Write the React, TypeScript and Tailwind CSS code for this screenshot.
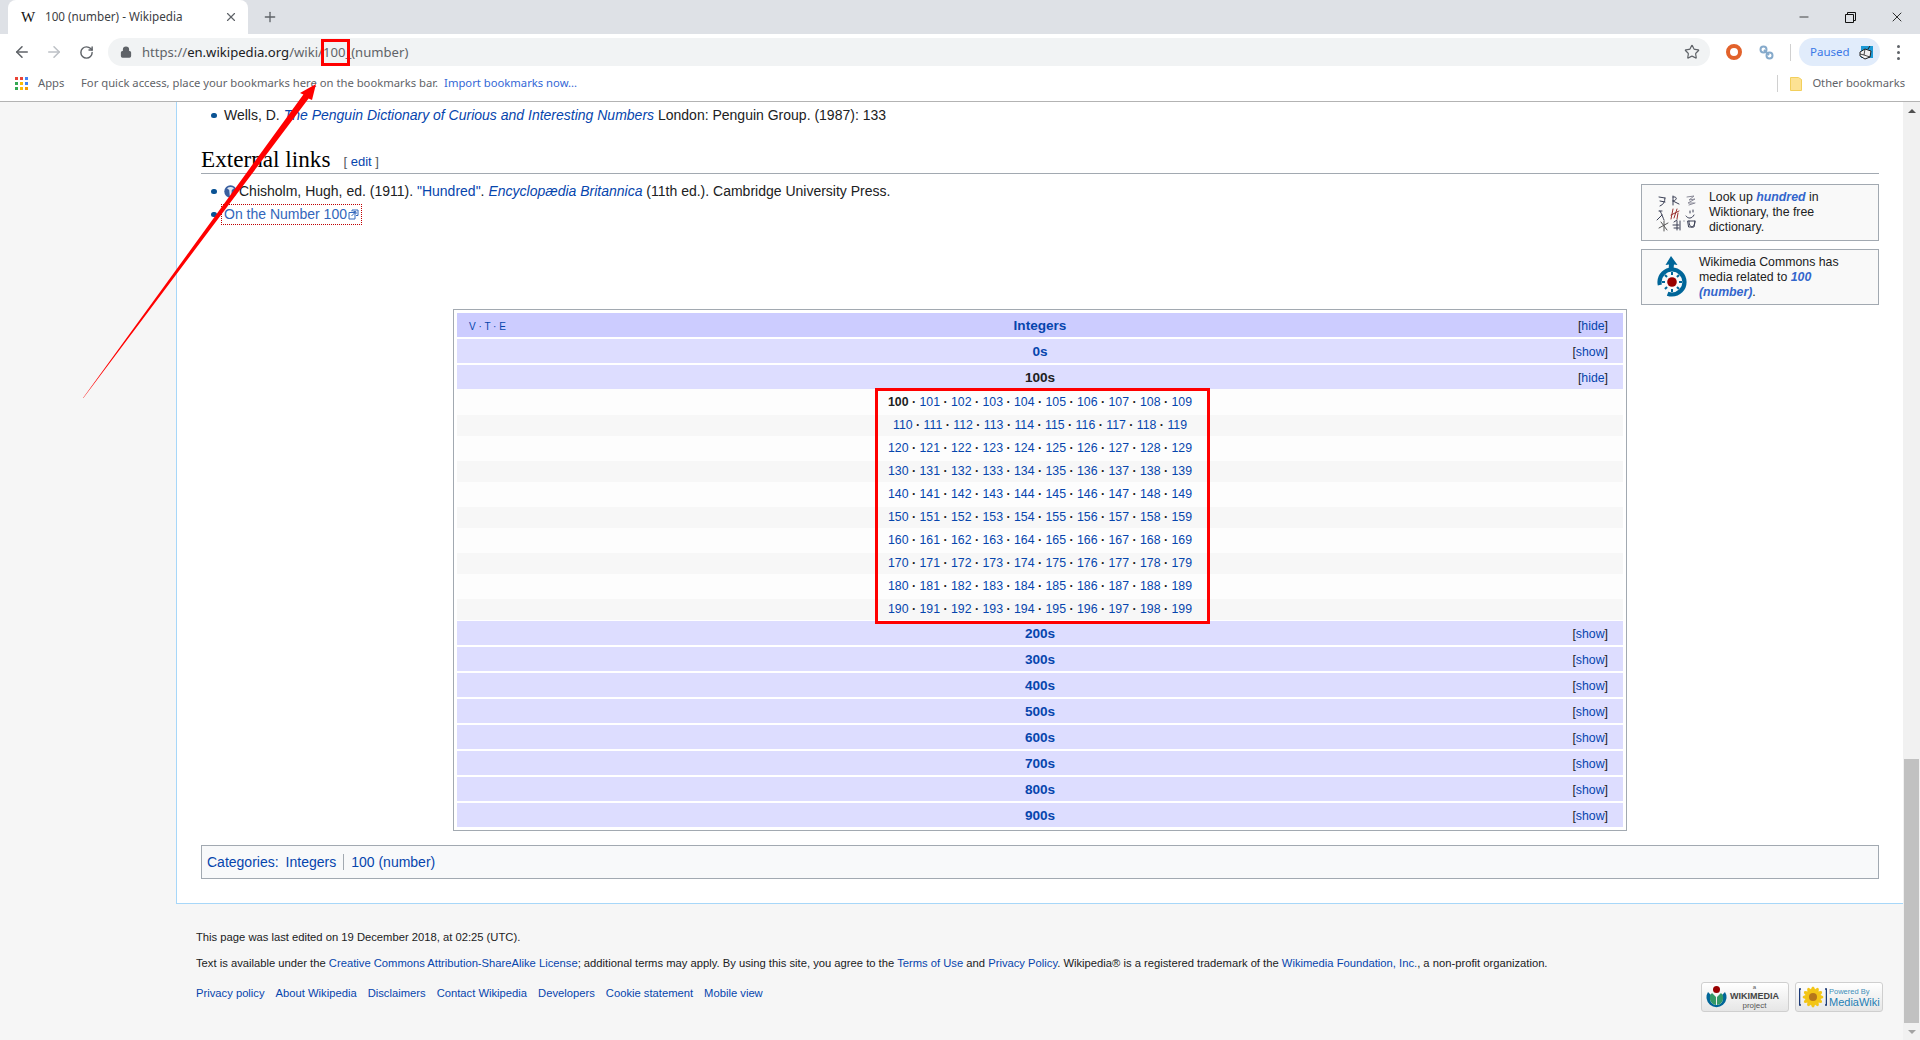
import React from "react";
import { ArrowLeft, ArrowRight, RotateCw, Lock, Star, Plus, X, Minus } from "lucide-react";

const hundreds = ["200s", "300s", "400s", "500s", "600s", "700s", "800s", "900s"];
const tens = [0, 1, 2, 3, 4, 5, 6, 7, 8, 9];

function Bullet() {
  return <span className="mr-[7px] h-[5px] w-[6px] shrink-0 rounded-full bg-[#0b5394]" />;
}

function Toggle({ label }: { label: string }) {
  return (
    <span className="text-[12.32px] text-[#202122]">
      [<a className="text-[#0645ad]">{label}</a>]
    </span>
  );
}

function NavHeader({ label, linked = true, action, flush = false }: { label: string; linked?: boolean; action: string; flush?: boolean }) {
  return (
    <div className={`relative flex h-[24px] items-center justify-center bg-[#ddddff] pt-[2px] ${flush ? "" : "mb-[2px]"}`}>
      <span className={`text-[13.6px] font-bold ${linked ? "text-[#0645ad]" : "text-[#202122]"}`}>{label}</span>
      <div className="absolute right-[15px] top-[2px]">
        <Toggle label={action} />
      </div>
    </div>
  );
}

function NumberRow({ decade }: { decade: number }) {
  const even = decade % 2 === 1;
  return (
    <div className={`flex items-center justify-center text-[12.32px] text-[#0645ad] ${even ? "my-px h-[21px] bg-[#f7f7f7]" : "h-[23px]"}`}>
      {tens.map((u) => {
        const n = 100 + decade * 10 + u;
        return (
          <React.Fragment key={n}>
            {n === 100 ? <b className="text-[#202122]">{n}</b> : <a>{n}</a>}
            {u < 9 && <b className="whitespace-pre text-[#202122]">{"\u00a0· "}</b>}
          </React.Fragment>
        );
      })}
    </div>
  );
}

function AppsIcon() {
  const c = ["#ea4335", "#ea4335", "#4285f4", "#34a853", "#fbbc05", "#4285f4", "#34a853", "#fbbc05", "#f29900"];
  return (
    <svg width="13" height="13" viewBox="0 0 13 13">
      {c.map((fill, i) => (
        <rect key={i} x={(i % 3) * 5} y={Math.floor(i / 3) * 5} width="3" height="3" fill={fill} />
      ))}
    </svg>
  );
}

function WiktionaryLogo() {
  return (
    <svg width="42" height="38" viewBox="0 0 42 38" fill="none" stroke="#3a3f55" strokeWidth="1" strokeLinecap="round">
      <path d="M3 3l6 1M4 7l5 1M9 4c0 4-2 7-5 8" />
      <path d="M17 2v9M17 3c4-1 5 3 0 4M17 7l6 3" />
      <path d="M31 3l7-1-5 4 6-1-7 4 6 0M33 11l6-2" stroke="#8a8a98" />
      <path d="M6 17l-3 0M4 17c2 3 3 7 4 9M6 21l-5 5" />
      <path d="M17 15l-2 10M21 15l-3 9M15 21l8-4M22 19l-1 6" stroke="#9b2f2f" />
      <path d="M30 22c2 3 6 3 8-1M37 16l0 2M34 17l0 2" />
      <path d="M3 34l9-5M5 28l6 8M8 27v10" stroke="#555" />
      <path d="M18 28l3-2M17 31h6M18 34h5M24 27v9M28 27h0M21 27v9" />
      <path d="M32 27h7l-1 6h-5zM33 27c0 5 2 6 3 6M39 27c0 4-2 6-3 6" />
    </svg>
  );
}

function CommonsLogo() {
  return (
    <svg width="32" height="42" viewBox="0 0 32 42">
      <circle cx="16" cy="26" r="12.5" fill="none" stroke="#069" strokeWidth="4.2" strokeDasharray="66 12" strokeDashoffset="-36" />
      <path d="M15 0l-5.5 9 3.5-.6c-.2 2-.3 3-.3 6.5h5c0-3.500 0-4.500 .3-6.500l3.500 .6z" fill="#069" />
      <circle cx="16" cy="26" r="4.800" fill="#900" />
      {[0, 45, 90, 135, 180, 225, 270, 315].map((a) => (
        <rect key={a} x="15" y="16" width="2" height="3" fill="#069" transform={`rotate(${a} 16 26)`} />
      ))}
    </svg>
  );
}

function GlobeIcon() {
  return (
    <svg width="13" height="13" viewBox="0 0 13 13" className="shrink-0">
      <circle cx="6.500" cy="6.500" r="6.200" fill="#3a5f9f" />
      <path d="M3 3.200c2-1.500 5-1.500 7 0l-2.200 1.800-.6 6h-1.400l-.6-6z" fill="#dfe7f2" />
    </svg>
  );
}

function ExternalIcon() {
  return (
    <svg width="11" height="11" viewBox="0 0 11 11" fill="none" stroke="#36b" strokeWidth="1" className="ml-px">
      <path d="M1 3.500h6v6.500h-6z" />
      <path d="M4 1h6v5.500h-2M4 1v1.500M3.500 7l4-4M5.500 2.500l2.500.2v2.300" />
    </svg>
  );
}

function WikimediaBadge() {
  return (
    <div className="flex h-[30px] w-[88px] items-center gap-[2px] rounded-[3px] border border-[#cfcfcf] bg-gradient-to-b from-[#ffffff] to-[#e6e6e6] pl-[3px]">
      <svg width="23" height="25" viewBox="0 0 23 25" className="shrink-0">
        <path d="M3 7a10 10 0 1 0 17 0l-3 3a6.500 6.500 0 1 1-11 0z" fill="#069" />
        <path d="M7 8a7 7 0 0 0 4 12v-8zM16 8a7 7 0 0 1-4 12v-8z" fill="#396" />
        <circle cx="11.500" cy="4.500" r="3.500" fill="#900" />
      </svg>
      <div className="flex flex-col items-center leading-none text-[#555]">
        <span className="text-[6px] leading-[7px]">a</span>
        <span className="text-[9px] font-bold leading-[10px] text-[#444]">WIKIMEDIA</span>
        <span className="text-[8px] leading-[9px]">project</span>
      </div>
    </div>
  );
}

function MediaWikiBadge() {
  return (
    <div className="flex h-[30px] w-[88px] items-center gap-[2px] rounded-[3px] border border-[#cfcfcf] bg-gradient-to-b from-[#ffffff] to-[#e6e6e6] pl-[3px]">
      <svg width="28" height="22" viewBox="0 0 28 22" className="shrink-0">
        <path d="M2 3H.5v16H2M26 3h1.500v16H26" fill="none" stroke="#1b3a78" strokeWidth="1.500" />
        {[0, 30, 60, 90, 120, 150].map((a) => (
          <ellipse key={a} cx="14" cy="11" rx="3" ry="10.500" fill="#f3c516" transform={`rotate(${a} 14 11)`} />
        ))}
        <circle cx="14" cy="11" r="4" fill="#b5761b" />
      </svg>
      <div className="flex flex-col leading-none">
        <span className="text-[7.500px] leading-[9px] text-[#3f8fb8]">Powered By</span>
        <span className="text-[11px] leading-[12px] text-[#1f7fb5]">MediaWiki</span>
      </div>
    </div>
  );
}

export default function App() {
  return (
    <div className="relative flex h-[1040px] w-[1920px] flex-col overflow-hidden bg-[#f6f6f6] font-['Liberation_Sans',Arial,sans-serif] text-[#202122]">
      {/* tab strip */}
      <div className="flex h-[34px] shrink-0 items-stretch bg-[#dee1e6] pl-[8px] font-['Noto_Sans',sans-serif]">
        <div className="flex w-[240px] items-center rounded-t-[8px] bg-white pl-[13px] pr-[10px]">
          <span className="w-[24px] font-['Liberation_Serif',serif] text-[15px] leading-none text-[#111]">W</span>
          <span className="flex-1 whitespace-nowrap text-[11.700px] text-[#3c4043]">100 (number) - Wikipedia</span>
          <X size={14} strokeWidth={2} className="text-[#5f6368]" />
        </div>
        <div className="flex w-[44px] items-center justify-center">
          <Plus size={16} strokeWidth={2} className="text-[#5f6368]" />
        </div>
        <div className="flex flex-1 items-center justify-end text-[#111]">
          <Minus size={14} strokeWidth={1.300} className="mr-[34px]" />
          <svg width="11" height="11" viewBox="0 0 11 11" fill="none" stroke="#111" strokeWidth="1" className="mr-[33px]">
            <path d="M.5 2.500h8v8h-8zM2.500 2.500v-2h8v8h-2" />
          </svg>
          <X size={16} strokeWidth={1.300} className="mr-[15px]" />
        </div>
      </div>

      {/* toolbar */}
      <div className="flex h-[34px] shrink-0 items-center bg-white pb-[2px] pl-[6px] pt-[4px] font-['Noto_Sans',sans-serif]">
        <div className="flex w-[32px] justify-center"><ArrowLeft size={18} strokeWidth={2.100} className="text-[#5f6368]" /></div>
        <div className="flex w-[32px] justify-center"><ArrowRight size={18} strokeWidth={2.100} className="text-[#bdc1c6]" /></div>
        <div className="flex w-[32px] justify-center"><RotateCw size={15} strokeWidth={2.300} className="text-[#5f6368]" /></div>
        <div className="ml-[6px] flex h-[28px] w-[1602px] items-center rounded-full bg-[#f1f3f4] pl-[12px] pr-[10px]">
          <Lock size={12} strokeWidth={2.500} className="text-[#5f6368]" fill="#5f6368" />
          <span className="ml-[10px] flex-1 whitespace-nowrap pt-px text-[13.100px] text-[#5f6368]">
            https://<span className="text-[#202124]">en.wikipedia.org</span>/wiki/100_(number)
          </span>
          <Star size={16} strokeWidth={1.800} className="text-[#5f6368]" />
        </div>
        <div className="ml-[8px] flex w-[32px] justify-center">
          <span className="h-[16px] w-[16px] rounded-full border-[4px] border-[#e2622b]" />
        </div>
        <div className="flex w-[32px] justify-center">
          <svg width="15" height="15" viewBox="0 0 15 15" fill="none" stroke="#86aacb" strokeWidth="2">
            <circle cx="4.500" cy="4.500" r="3" />
            <circle cx="10.500" cy="10.500" r="3" />
            <path d="M5 5l5 5" />
          </svg>
        </div>
        <div className="ml-[8px] h-[17px] w-px bg-[#d0d0d0]" />
        <div className="ml-[8px] flex h-[28px] w-[81px] items-center rounded-full bg-[#e1ecfb] pl-[11px]">
          <span className="w-[49px] text-[11.500px] text-[#3b78e7]">Paused</span>
          <svg width="14" height="16" viewBox="0 0 14 16">
            <rect x="2" y="2" width="12" height="12" fill="#1d9ad6" />
            <path d="M1 8l5-3 6 2-1 6-5 2-5-3z" fill="#f2f2f2" stroke="#222" strokeWidth="1" />
            <path d="M6 5l-1 6 6 2M5 11l-4-1" stroke="#222" fill="none" strokeWidth=".8" />
            <path d="M9 5l2-3" stroke="#222" strokeWidth="1" />
          </svg>
        </div>
        <div className="ml-[17px] flex flex-col gap-[3px]">
          <span className="h-[3px] w-[3px] rounded-full bg-[#5f6368]" />
          <span className="h-[3px] w-[3px] rounded-full bg-[#5f6368]" />
          <span className="h-[3px] w-[3px] rounded-full bg-[#5f6368]" />
        </div>
      </div>

      {/* bookmarks bar */}
      <div className="flex h-[34px] shrink-0 items-center border-b border-[#b3b3b3] bg-white pb-[2px] pl-[15px] pr-[15px] font-['Noto_Sans',sans-serif] text-[11.250px] text-[#5f6368]">
        <AppsIcon />
        <span className="ml-[10px] w-[43px]">Apps</span>
        <span className="whitespace-nowrap">For quick access, place your bookmarks here on the bookmarks bar.</span>
        <a className="ml-[6px] whitespace-nowrap text-[#3367d6]">Import bookmarks now...</a>
        <div className="ml-auto h-[17px] w-px bg-[#d0d0d0]" />
        <svg width="12" height="14" viewBox="0 0 12 14" className="ml-[12px]">
          <path d="M.5.500h8l3 2v11h-11z" fill="#fde293" stroke="#f2cf5c" />
        </svg>
        <span className="ml-[10px] text-[11.200px]">Other bookmarks</span>
      </div>

      {/* page */}
      <div className="flex min-h-0 flex-1">
        <div className="flex min-w-0 flex-1 flex-col">
          <div className="ml-[176px] border-b border-l border-[#a7d7f9] bg-white pb-[24px] pl-[24px] pr-[24px] pt-[2px] text-[14px]">
            <div className="flex h-[22px] items-center pl-[10px]">
              <Bullet />
              <span className="whitespace-nowrap">
                Wells, D. <i className="text-[#0645ad]">The Penguin Dictionary of Curious and Interesting Numbers</i> London: Penguin Group. (1987): 133
              </span>
            </div>

            <div className="mt-[21px] flex h-[27px] items-center border-b border-[#a2a9b1]">
              <h2 className="font-['Liberation_Serif',serif] text-[23.200px] leading-none text-black">External links</h2>
              <span className="ml-[13px] mt-[4px] text-[13px] text-[#54595d]">
                [ <a className="text-[#0645ad]">edit</a> ]
              </span>
            </div>

            <div className="flex items-start justify-between">
              <div className="pl-[10px] pt-[6px]">
                <div className="flex h-[23px] items-center">
                  <Bullet />
                  <GlobeIcon />
                  <span className="ml-[2px] whitespace-nowrap">
                    Chisholm, Hugh, ed. (1911). <a className="text-[#0645ad]">"Hundred"</a>. <i className="text-[#0645ad]">Encyclopædia Britannica</i> (11th ed.). Cambridge University Press.
                  </span>
                </div>
                <div className="flex h-[23px] items-center">
                  <Bullet />
                  <span className="-ml-[3px] flex h-[21px] items-center border border-dotted border-[#c00000] pl-[2px] pr-[2px] text-[#3366bb]">
                    On the Number 100
                    <ExternalIcon />
                  </span>
                </div>
              </div>

              <div className="mt-[10px] flex w-[238px] flex-col gap-[8px] text-[12.320px] leading-[15px]">
                <div className="flex h-[57px] items-center border border-[#a2a9b1] bg-[#f9f9f9] pl-[14px]">
                  <WiktionaryLogo />
                  <p className="ml-[11px]">
                    Look up <b className="italic text-[#3366cc]">hundred</b> in<br />Wiktionary, the free<br />dictionary.
                  </p>
                </div>
                <div className="flex h-[56px] items-center border border-[#a2a9b1] bg-[#f9f9f9] pl-[14px]">
                  <CommonsLogo />
                  <p className="ml-[11px]">
                    Wikimedia Commons has<br />media related to <b className="italic text-[#3366cc]">100</b><br /><b className="italic text-[#3366cc]">(number)</b>.
                  </p>
                </div>
              </div>
            </div>

            <div className="mx-auto mt-[4px] w-[1174px] border border-[#a2a9b1] bg-white p-[3px]">
              <div className="relative mb-[2px] flex h-[24px] items-center justify-center bg-[#ccccff] pt-[2px]">
                <span className="absolute left-[12px] text-[10px] text-[#0645ad]">V · T · E</span>
                <span className="text-[13.600px] font-bold text-[#0645ad]">Integers</span>
                <div className="absolute right-[15px] top-[2px]"><Toggle label="hide" /></div>
              </div>
              <NavHeader label="0s" action="show" />
              <NavHeader label="100s" linked={false} action="hide" flush />
              <div className="bg-[#fdfdfd] pt-[2px]">
                {tens.map((d) => <NumberRow key={d} decade={d} />)}
              </div>
              {hundreds.map((h, i) => (
                <NavHeader key={h} label={h} action="show" flush={i === hundreds.length - 1} />
              ))}
            </div>

            <div className="mt-[14px] flex h-[34px] items-center border border-[#a2a9b1] bg-[#f8f9fa] pl-[5px] text-[#0645ad]">
              <a>Categories</a>:
              <a className="ml-[7px]">Integers</a>
              <span className="ml-[7px] h-[16px] w-px bg-[#a2a9b1]" />
              <a className="ml-[7px]">100 (number)</a>
            </div>
          </div>

          <footer className="flex-1 pl-[196px] pr-[20px] pt-[24px] text-[11.220px] leading-[18px]">
            <p>This page was last edited on 19 December 2018, at 02:25 (UTC).</p>
            <p className="mt-[8px] whitespace-nowrap">
              Text is available under the <a className="text-[#0645ad]">Creative Commons Attribution-ShareAlike License</a>; additional terms may apply. By using this site, you agree to the <a className="text-[#0645ad]">Terms of Use</a> and <a className="text-[#0645ad]">Privacy Policy</a>. Wikipedia® is a registered trademark of the <a className="text-[#0645ad]">Wikimedia Foundation, Inc.</a>, a non-profit organization.
            </p>
            <div className="mt-[10px] flex items-start justify-between">
              <div className="flex gap-[11px] pt-[2px] text-[#0645ad]">
                <a>Privacy policy</a>
                <a>About Wikipedia</a>
                <a>Disclaimers</a>
                <a>Contact Wikipedia</a>
                <a>Developers</a>
                <a>Cookie statement</a>
                <a>Mobile view</a>
              </div>
              <div className="flex gap-[6px]">
                <WikimediaBadge />
                <MediaWikiBadge />
              </div>
            </div>
          </footer>
        </div>

        {/* scrollbar */}
        <div className="flex w-[17px] shrink-0 flex-col bg-[#f1f1f1]">
          <div className="flex h-[17px] items-center justify-center">
            <span className="h-0 w-0 border-x-[4px] border-b-[4px] border-x-transparent border-b-[#505050]" />
          </div>
          <div className="h-[640px]" />
          <div className="mx-px flex-1 bg-[#c1c1c1]" />
          <div className="flex h-[17px] items-center justify-center">
            <span className="h-0 w-0 border-x-[4px] border-t-[4px] border-x-transparent border-t-[#a3a3a3]" />
          </div>
        </div>
      </div>

      {/* annotations lying over the screenshot */}
      <div className="absolute left-[321px] top-[39px] h-[27px] w-[29px] border-[3px] border-[#ff0000]" />
      <div className="absolute left-[875px] top-[388px] h-[236px] w-[335px] border-[3px] border-[#ff0000]" />
      <svg className="pointer-events-none absolute left-0 top-0" width="400" height="420" viewBox="0 0 400 420">
        <polygon points="83,398 303.400,94.600 300,93 316,84 312,100 308.600,98.400 83.400,398" fill="#ff0000" />
      </svg>
    </div>
  );
}
